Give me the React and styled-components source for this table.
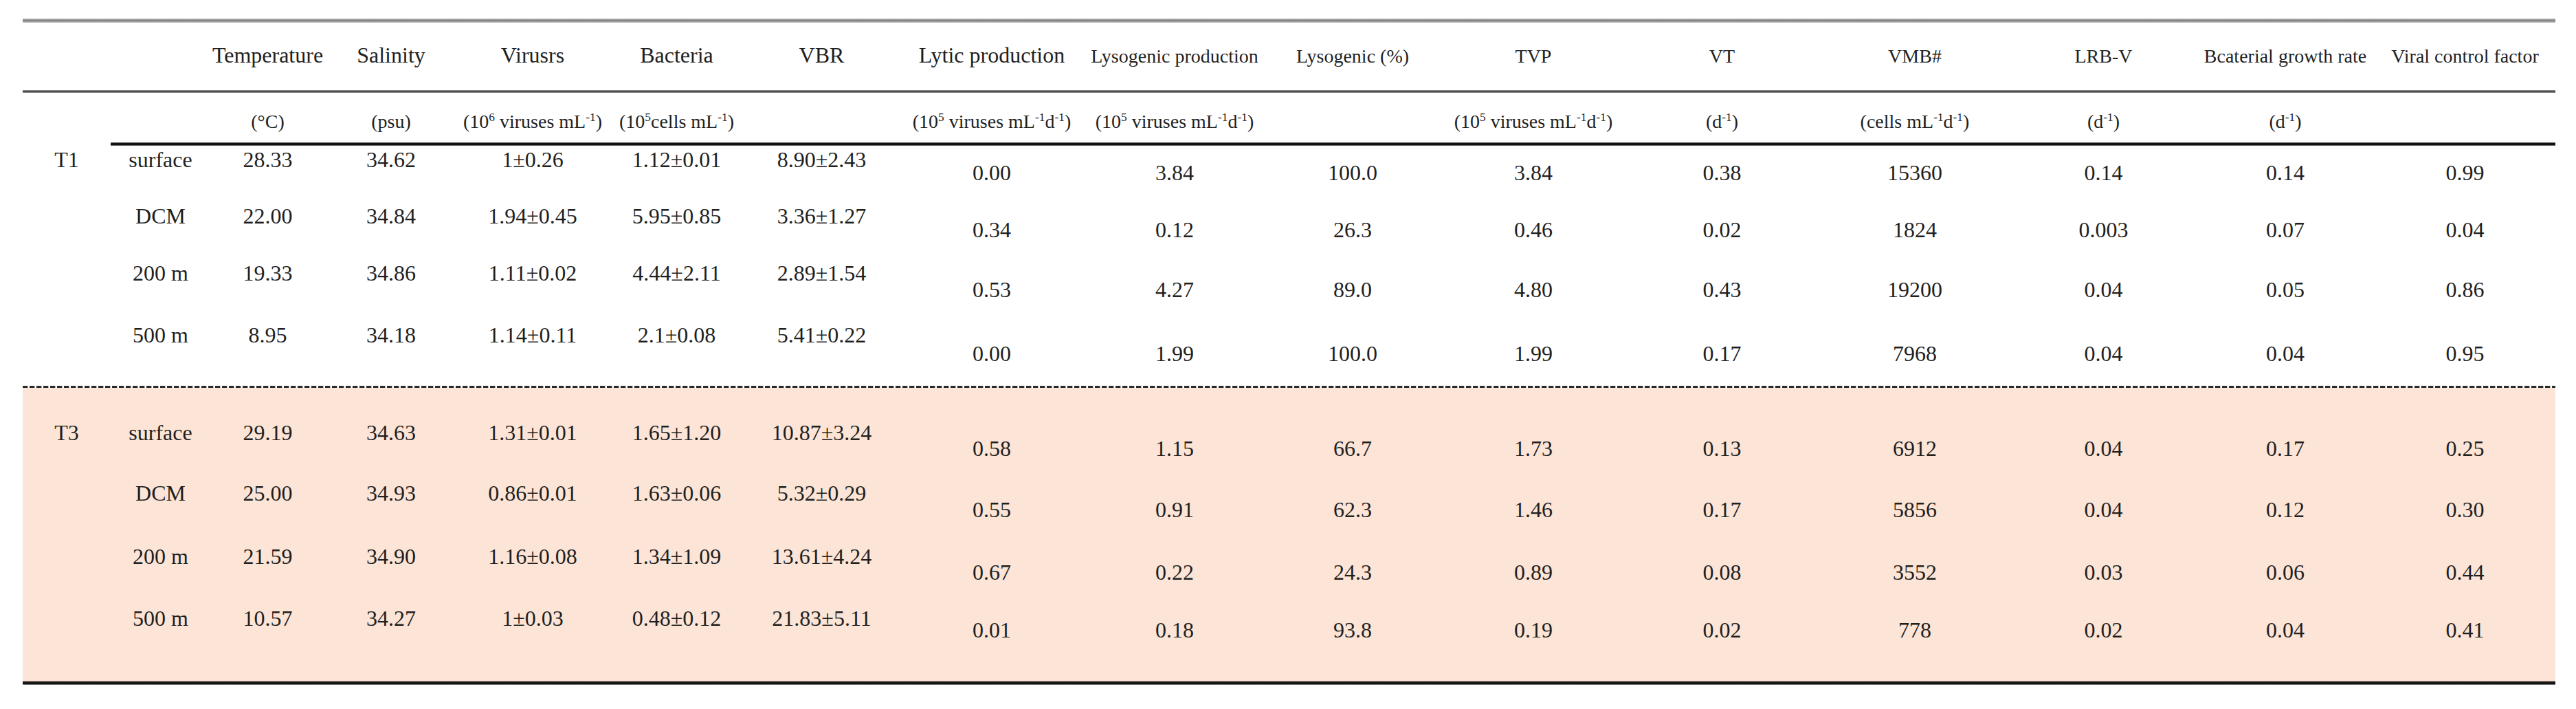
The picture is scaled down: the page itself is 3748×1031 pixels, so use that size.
import React from "react";
import styled, { createGlobalStyle } from "styled-components";

const GlobalStyle = createGlobalStyle`
  html, body {
    margin: 0;
    padding: 0;
    background: #ffffff;
  }
  body {
    font-family: "Liberation Serif", "Times New Roman", serif;
    color: #1f1f1f;
  }
`;

const COLUMNS = [128, 145, 167, 192, 220, 199, 223, 272, 260, 258, 268, 281, 280, 269, 260, 263];
const TEMPLATE = COLUMNS.map((w) => `${w}px`).join(" ");

const Page = styled.div`
  width: 3748px;
  height: 1031px;
  box-sizing: border-box;
  padding: 27px 30px 0 33px;
  background: #ffffff;
`;

const Table = styled.div`
  width: 3685px;
  display: flex;
  flex-direction: column;
`;

const TopRule = styled.div`
  height: 6px;
  background: linear-gradient(#c4c4c4, #858585 40%, #8a8a8a 60%, #c8c8c8);
`;

const MidRule = styled.div`
  height: 4px;
  background: linear-gradient(#9a9a9a, #3a3a3a 50%, #9a9a9a);
`;

const UnitRule = styled.div`
  height: 5px;
  margin-left: 128px;
  background: linear-gradient(#8c8c8c, #111 30%, #111 75%, #9a9a9a);
`;

const DashedRule = styled.div`
  height: 3px;
  background: repeating-linear-gradient(to right, #2a2a2a 0 7px, #b8b8b8 7px 8px, transparent 8px 10px);
`;

const BottomRule = styled.div`
  height: 6px;
  background: linear-gradient(#c0a89c, #151515 35%, #151515 75%, #b0b0b0);
`;

const Grid = styled.div`
  display: grid;
  grid-template-columns: ${TEMPLATE};
  height: ${(p) => p.$h}px;
`;

const HeadCell = styled.div`
  padding-top: ${(p) => (p.$small ? 29 : 27)}px;
  text-align: center;
  white-space: nowrap;
  font-size: ${(p) => (p.$small ? 28 : 32)}px;
  line-height: 40px;
`;

const UnitCell = styled.div`
  padding-top: 24px;
  text-align: center;
  white-space: nowrap;
  font-size: 28px;
  line-height: 36px;
`;

const Sup = styled.sup`
  font-size: 0.62em;
  line-height: 0;
  vertical-align: 0.55em;
`;

const Section = styled.div`
  display: flex;
  flex-direction: column;
  padding-top: ${(p) => p.$padTop}px;
  background: ${(p) => (p.$tinted ? "#fce4d6" : "transparent")};
`;

const Cell = styled.div`
  padding-top: ${(p) => p.$shift || 0}px;
  text-align: center;
  white-space: nowrap;
  font-size: 32px;
  line-height: 40px;
`;

const HEADERS = [
  { t: "" },
  { t: "" },
  { t: "Temperature" },
  { t: "Salinity" },
  { t: "Virusrs" },
  { t: "Bacteria" },
  { t: "VBR" },
  { t: "Lytic production" },
  { t: "Lysogenic production", small: true },
  { t: "Lysogenic (%)", small: true },
  { t: "TVP", small: true },
  { t: "VT", small: true },
  { t: "VMB#", small: true },
  { t: "LRB-V", small: true },
  { t: "Bcaterial growth rate", small: true },
  { t: "Viral control factor", small: true },
];

const viralProd = (
  <>
    (10<Sup>5</Sup> viruses mL<Sup>-1</Sup>d<Sup>-1</Sup>)
  </>
);
const perDay = (
  <>
    (d<Sup>-1</Sup>)
  </>
);

const UNITS = [
  null,
  null,
  <>(°C)</>,
  <>(psu)</>,
  <>
    (10<Sup>6</Sup> viruses mL<Sup>-1</Sup>)
  </>,
  <>
    (10<Sup>5</Sup>cells mL<Sup>-1</Sup>)
  </>,
  null,
  viralProd,
  viralProd,
  null,
  viralProd,
  perDay,
  <>
    (cells mL<Sup>-1</Sup>d<Sup>-1</Sup>)
  </>,
  perDay,
  perDay,
  null,
];

const SECTIONS = [
  {
    label: "T1",
    tinted: false,
    padTop: 0,
    rows: [
      { h: 82, shift: 19, depth: "surface", left: ["28.33", "34.62", "1±0.26", "1.12±0.01", "8.90±2.43"], right: ["0.00", "3.84", "100.0", "3.84", "0.38", "15360", "0.14", "0.14", "0.99"] },
      { h: 83, shift: 20, depth: "DCM", left: ["22.00", "34.84", "1.94±0.45", "5.95±0.85", "3.36±1.27"], right: ["0.34", "0.12", "26.3", "0.46", "0.02", "1824", "0.003", "0.07", "0.04"] },
      { h: 90, shift: 24, depth: "200 m", left: ["19.33", "34.86", "1.11±0.02", "4.44±2.11", "2.89±1.54"], right: ["0.53", "4.27", "89.0", "4.80", "0.43", "19200", "0.04", "0.05", "0.86"] },
      { h: 94, shift: 27, depth: "500 m", left: ["8.95", "34.18", "1.14±0.11", "2.1±0.08", "5.41±0.22"], right: ["0.00", "1.99", "100.0", "1.99", "0.17", "7968", "0.04", "0.04", "0.95"] },
    ],
  },
  {
    label: "T3",
    tinted: true,
    padTop: 45,
    rows: [
      { h: 88, shift: 23, depth: "surface", left: ["29.19", "34.63", "1.31±0.01", "1.65±1.20", "10.87±3.24"], right: ["0.58", "1.15", "66.7", "1.73", "0.13", "6912", "0.04", "0.17", "0.25"] },
      { h: 92, shift: 24, depth: "DCM", left: ["25.00", "34.93", "0.86±0.01", "1.63±0.06", "5.32±0.29"], right: ["0.55", "0.91", "62.3", "1.46", "0.17", "5856", "0.04", "0.12", "0.30"] },
      { h: 90, shift: 23, depth: "200 m", left: ["21.59", "34.90", "1.16±0.08", "1.34±1.09", "13.61±4.24"], right: ["0.67", "0.22", "24.3", "0.89", "0.08", "3552", "0.03", "0.06", "0.44"] },
      { h: 111, shift: 17, depth: "500 m", left: ["10.57", "34.27", "1±0.03", "0.48±0.12", "21.83±5.11"], right: ["0.01", "0.18", "93.8", "0.19", "0.02", "778", "0.02", "0.04", "0.41"] },
    ],
  },
];

function DataSection({ section }) {
  return (
    <Section $tinted={section.tinted} $padTop={section.padTop}>
      {section.rows.map((row, i) => (
        <Grid key={row.depth} $h={row.h}>
          <Cell>{i === 0 ? section.label : ""}</Cell>
          <Cell>{row.depth}</Cell>
          {row.left.map((v, j) => (
            <Cell key={`l${j}`}>{v}</Cell>
          ))}
          {row.right.map((v, j) => (
            <Cell key={`r${j}`} $shift={row.shift}>
              {v}
            </Cell>
          ))}
        </Grid>
      ))}
    </Section>
  );
}

export default function App() {
  return (
    <>
      <GlobalStyle />
      <Page>
        <Table>
          <TopRule />
          <Grid $h={98}>
            {HEADERS.map((h, i) => (
              <HeadCell key={i} $small={h.small}>
                {h.t}
              </HeadCell>
            ))}
          </Grid>
          <MidRule />
          <Grid $h={72}>
            {UNITS.map((u, i) => (
              <UnitCell key={i}>{u}</UnitCell>
            ))}
          </Grid>
          <UnitRule />
          <DataSection section={SECTIONS[0]} />
          <DashedRule />
          <DataSection section={SECTIONS[1]} />
          <BottomRule />
        </Table>
      </Page>
    </>
  );
}
